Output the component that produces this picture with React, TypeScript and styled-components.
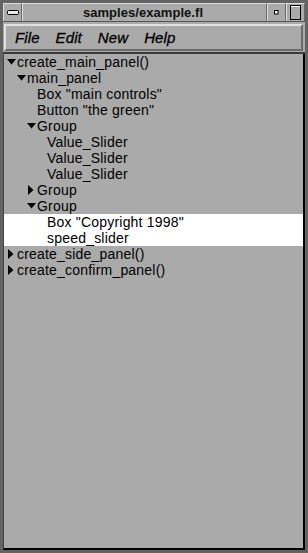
import React from "react";
import styled, { createGlobalStyle } from "styled-components";

const Global = createGlobalStyle`
  html, body { margin: 0; padding: 0; background: #aaaaaa; }
  body { font-family: "Liberation Sans", Arial, sans-serif; }
`;

const Window = styled.div`
  box-sizing: border-box;
  width: 308px;
  height: 553px;
  background: #aaaaaa;
  border: 3px solid #636363;
  display: flex;
  flex-direction: column;
`;

const TitleBar = styled.div`
  display: grid;
  grid-template-columns: 19px 1fr 19px 19px;
  height: 19px;
  border-bottom: 1px solid #555;
  box-sizing: border-box;
`;

const TitleCell = styled.div`
  box-sizing: border-box;
  border-top: 1px solid #dcdcdc;
  border-left: 1px solid #dcdcdc;
  border-right: 1px solid #6a6a6a;
  display: flex;
  align-items: center;
  justify-content: center;
  background: #aaaaaa;
`;

const TitleText = styled.span`
  font-weight: bold;
  font-size: 13px;
  color: #111;
  letter-spacing: 0.05px;
  margin-left: -3px;
`;

const MenuWrap = styled.div`
  padding: 2px 2px 1px 1px;
  border-bottom: 2px solid #3a3a3a;
`;

const MenuBar = styled.div`
  box-sizing: border-box;
  height: 27px;
  border-top: 2px solid #e0e0e0;
  border-left: 2px solid #e0e0e0;
  border-right: 2px solid #6a6a6a;
  border-bottom: 2px solid #6a6a6a;
  display: flex;
  align-items: center;
  padding-left: 9px;
  gap: 16px;
`;

const MenuItem = styled.span`
  font-style: italic;
  font-size: 15px;
  color: #000;
  letter-spacing: 0.1px;
  -webkit-text-stroke: 0.3px #000;
`;

const Content = styled.div`
  flex: 1;
  box-sizing: border-box;
  border-left: 1px solid #444;
  border-right: 2px solid #000;
  border-bottom: 2px solid #000;
`;

const Row = styled.div<{ $level: number; $selected?: boolean }>`
  height: 16px;
  display: flex;
  align-items: center;
  padding-left: ${(p) => 3 + 10 * p.$level}px;
  background: ${(p) => (p.$selected ? "#ffffff" : "transparent")};
  font-size: 14px;
  color: #000;
  white-space: nowrap;
  letter-spacing: 0.2px;
`;

const Toggle = styled.span`
  width: 10px;
  height: 16px;
  display: inline-flex;
  align-items: center;
  justify-content: flex-start;
  flex: none;
`;

const Label = styled.span`
  line-height: 16px;
`;

type Node = { label: string; level: number; state?: "open" | "closed"; selected?: boolean };

const nodes: Node[] = [
  { label: "create_main_panel()", level: 0, state: "open" },
  { label: "main_panel", level: 1, state: "open" },
  { label: 'Box "main controls"', level: 2 },
  { label: 'Button "the green"', level: 2 },
  { label: "Group", level: 2, state: "open" },
  { label: "Value_Slider", level: 3 },
  { label: "Value_Slider", level: 3 },
  { label: "Value_Slider", level: 3 },
  { label: "Group", level: 2, state: "closed" },
  { label: "Group", level: 2, state: "open" },
  { label: 'Box "Copyright 1998"', level: 3, selected: true },
  { label: "speed_slider", level: 3, selected: true },
  { label: "create_side_panel()", level: 0, state: "closed" },
  { label: "create_confirm_panel()", level: 0, state: "closed" },
];

const Down = () => (
  <svg width="10" height="6" viewBox="0 0 10 6">
    <polygon points="0,0 9,0 4.5,5.5" fill="#000" />
  </svg>
);

const Right = () => (
  <svg width="8" height="11" viewBox="0 0 8 11">
    <polygon points="1,0 6.5,5 1,10" fill="#000" />
  </svg>
);

export default function App() {
  return (
    <>
      <Global />
      <Window>
        <TitleBar>
          <TitleCell>
            <svg width="12" height="6" viewBox="0 0 12 6">
              <rect x="0.5" y="0.5" width="11" height="4" rx="1" fill="#e8e8e8" stroke="#000" />
            </svg>
          </TitleCell>
          <TitleCell>
            <TitleText>samples/example.fl</TitleText>
          </TitleCell>
          <TitleCell>
            <svg width="5" height="5" viewBox="0 0 5 5">
              <rect x="0.5" y="0.5" width="3.5" height="3.5" fill="#fff" stroke="#000" />
            </svg>
          </TitleCell>
          <TitleCell>
            <svg width="11" height="15" viewBox="0 0 11 15">
              <rect x="0.5" y="0.5" width="10" height="14" fill="none" stroke="#000" />
              <line x1="1" y1="1.5" x2="10" y2="1.5" stroke="#fff" />
            </svg>
          </TitleCell>
        </TitleBar>
        <MenuWrap>
          <MenuBar>
            <MenuItem>File</MenuItem>
            <MenuItem>Edit</MenuItem>
            <MenuItem>New</MenuItem>
            <MenuItem>Help</MenuItem>
          </MenuBar>
        </MenuWrap>
        <Content>
          {nodes.map((n, i) => (
            <Row key={i} $level={n.level} $selected={n.selected}>
              <Toggle>{n.state === "open" ? <Down /> : n.state === "closed" ? <Right /> : null}</Toggle>
              <Label>{n.label}</Label>
            </Row>
          ))}
        </Content>
      </Window>
    </>
  );
}
